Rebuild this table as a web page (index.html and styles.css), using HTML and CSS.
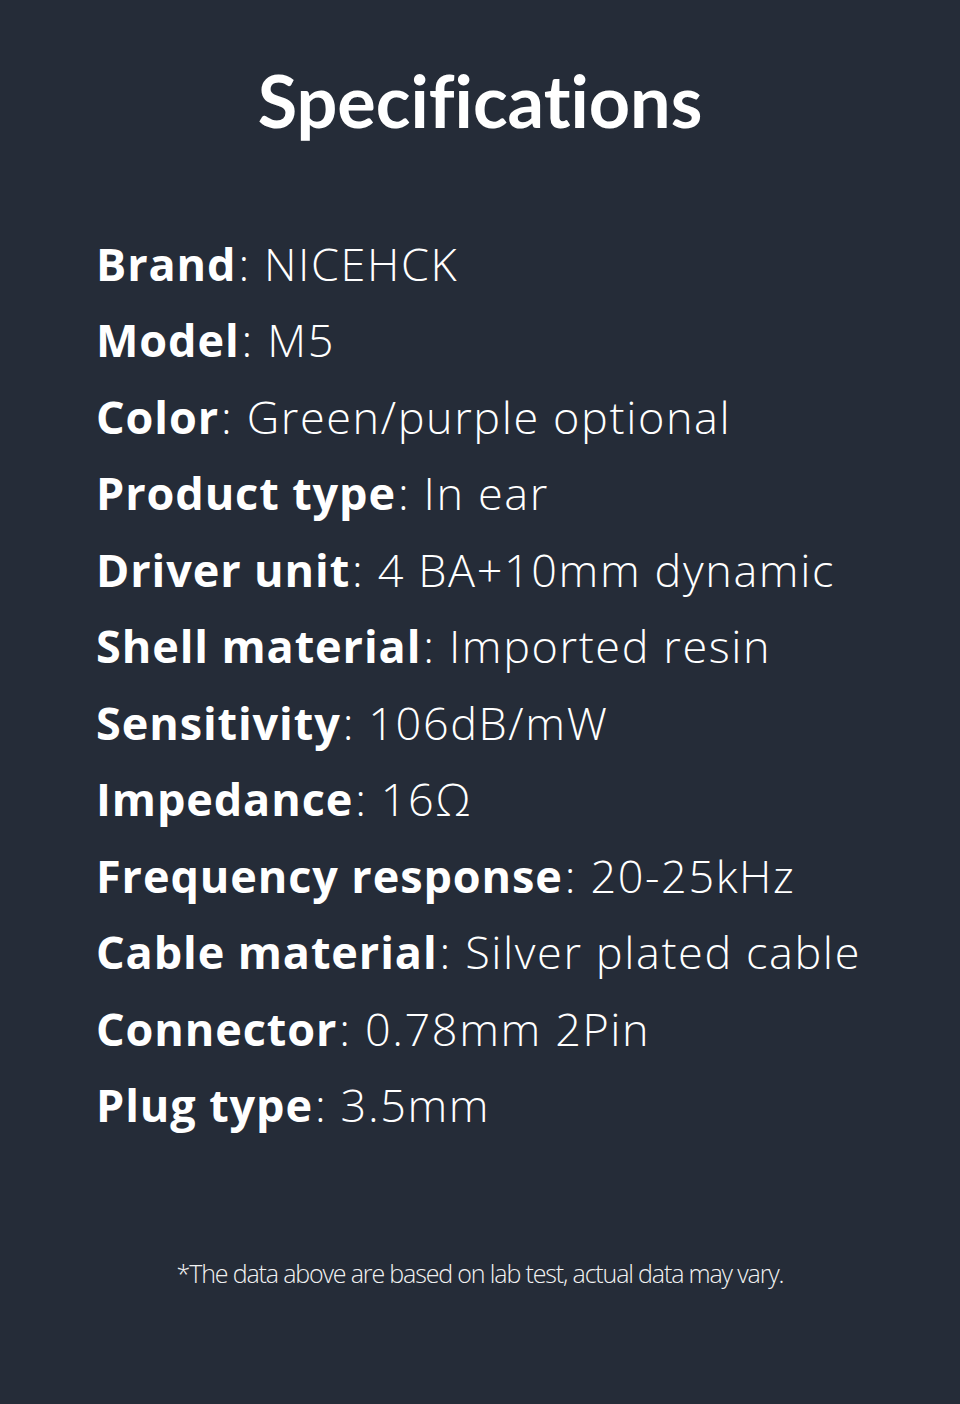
FILE: index.html
```html
<!DOCTYPE html>
<html>
<head>
<meta charset="utf-8">
<link rel="stylesheet" href="styles.css">
</head>
<body>
<main class="page">
  <h1 class="title">Specifications</h1>
  <ul class="specs">
    <li><b>Brand</b><span class="colon">:</span> NICEHCK</li>
    <li><b>Model</b><span class="colon">:</span> M5</li>
    <li><b>Color</b><span class="colon">:</span> Green/purple optional</li>
    <li><b>Product type</b><span class="colon">:</span> In ear</li>
    <li><b>Driver unit</b><span class="colon">:</span> 4 BA+10mm dynamic</li>
    <li><b>Shell material</b><span class="colon">:</span> Imported resin</li>
    <li><b>Sensitivity</b><span class="colon">:</span> 106dB/mW</li>
    <li><b>Impedance</b><span class="colon">:</span> 16Ω</li>
    <li><b>Frequency response</b><span class="colon">:</span> 20-25kHz</li>
    <li><b>Cable material</b><span class="colon">:</span> Silver plated cable</li>
    <li><b>Connector</b><span class="colon">:</span> 0.78mm 2Pin</li>
    <li><b>Plug type</b><span class="colon">:</span> 3.5mm</li>
  </ul>
  <p class="note">*The data above are based on lab test, actual data may vary.</p>
</main>
</body>
</html>
```

FILE: styles.css
```css
html, body {
  margin: 0;
  padding: 0;
  background: #252c38;
}
.page {
  width: 960px;
  height: 1404px;
  box-sizing: border-box;
  padding-top: 57px;
  color: #ffffff;
  font-family: "Open Sans", "DejaVu Sans", sans-serif;
}
.title {
  margin: 0;
  text-align: center;
  font-family: "Lato", "Open Sans", sans-serif;
  font-weight: 700;
  font-size: 72px;
  line-height: 86px;
  font-variant-ligatures: none;
  font-feature-settings: "liga" 0;
}
.specs {
  list-style: none;
  margin: 83px 0 0;
  padding: 0 0 0 96px;
}
.specs li {
  font-size: 45px;
  line-height: 76.45px;
  font-weight: 300;
  letter-spacing: 1.6px;
  white-space: nowrap;
}
.specs b {
  font-weight: 700;
  letter-spacing: 0.9px;
}
.colon {
  padding-left: 2px;
}
.note {
  margin: 113px 0 0;
  text-align: center;
  font-size: 25px;
  font-weight: 300;
  letter-spacing: -1.15px;
  color: #f2f2f2;
}
```
